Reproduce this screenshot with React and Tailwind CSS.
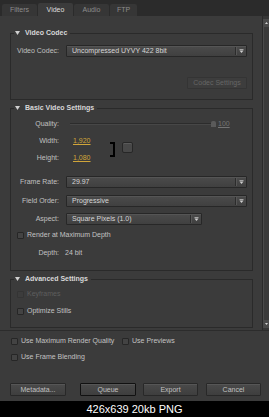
import React from "react";

const font = { fontFamily: '"Liberation Sans", Arial, sans-serif' };

function Tri() {
  return (
    <svg width="5" height="4" viewBox="0 0 5 4" className="shrink-0">
      <path d="M0 0h5L2.5 4z" fill="#d0d0d0" />
    </svg>
  );
}

function DropArrow() {
  return (
    <svg width="5" height="4" viewBox="0 0 5 4">
      <rect x="0.5" y="0" width="4" height="0.8" fill="#bdbdbd" />
      <path d="M0.5 1.6h4L2.5 4z" fill="#cfcfcf" />
    </svg>
  );
}

function Group({ title, className = "", children }) {
  return (
    <fieldset className={`border border-[#2a2a2a] ${className}`}>
      <legend className="ml-[3px] h-[10px] pr-[3px] leading-[10px]">
        <span className="flex h-[10px] items-center text-[7px] font-bold text-[#d8d8d8]">
          <span className="ml-[1px] mr-[5px]">
            <Tri />
          </span>
          {title}
        </span>
      </legend>
      {children}
    </fieldset>
  );
}

function Label({ children }) {
  return <span className="w-[48px] shrink-0 text-right text-[#c0c0c0]">{children}</span>;
}

function Select({ value, className = "" }) {
  return (
    <div
      className={`flex h-[12px] items-center rounded-[1px] border border-[#272727] bg-gradient-to-b from-[#4b4b4b] to-[#404040] shadow-[inset_0_1px_0_#555] ${className}`}
    >
      <span className="flex-1 truncate pl-[5px] leading-[10px] text-[#d6d6d6]">{value}</span>
      <span className="h-[8px] w-px bg-[#2c2c2c]" />
      <span className="h-[8px] w-px bg-[#565656]" />
      <span className="flex w-[9px] justify-center">
        <DropArrow />
      </span>
    </div>
  );
}

function Check({ label, dim = false, className = "" }) {
  return (
    <div className={`flex h-[10px] items-center leading-[10px] ${className}`}>
      <span
        className={`h-[7px] w-[7px] shrink-0 rounded-[1px] border ${
          dim ? "border-[#343434] bg-[#3c3c3c]" : "border-[#262626] bg-[#434343]"
        }`}
      />
      <span className={`ml-[3px] ${dim ? "text-[#5e5e5e]" : "text-[#c2c2c2]"}`}>{label}</span>
    </div>
  );
}

function Button({ children, className = "", focus = false }) {
  return (
    <div
      className={`flex h-[13px] items-center justify-center rounded-[1px] border bg-gradient-to-b from-[#4a4a4a] to-[#3e3e3e] leading-[10px] text-[#c0c0c0] shadow-[inset_0_1px_0_#565656] ${
        focus ? "border-[#111]" : "border-[#282828]"
      } ${className}`}
    >
      {children}
    </div>
  );
}

function Tab({ children, active = false, w }) {
  return (
    <div
      className={`flex items-center justify-center rounded-t-[2px] leading-[10px] ${w} ${
        active ? "h-[13px] bg-[#3b3b3b] text-[#dedede]" : "h-[12px] bg-[#363636] text-[#8c8c8c]"
      }`}
    >
      {children}
    </div>
  );
}

function Scrollbar() {
  return (
    <div className="flex w-[7px] flex-col border-l border-[#2a2a2a] bg-[#363636] pb-[2px] pt-[3px]">
      <div className="flex h-[8px] items-center justify-center bg-[#4a4a4a]">
        <svg width="3" height="2" viewBox="0 0 3 2">
          <path d="M0 2h3L1.5 0z" fill="#cfcfcf" />
        </svg>
      </div>
      <div className="flex-1 border-l border-[#4a4a4a] bg-[#3a3a3a]" />
      <div className="flex h-[8px] items-center justify-center bg-[#4a4a4a]">
        <svg width="3" height="2" viewBox="0 0 3 2">
          <path d="M0 0h3L1.5 2z" fill="#cfcfcf" />
        </svg>
      </div>
    </div>
  );
}

export default function App() {
  return (
    <div className="flex h-[417px] w-[269px] flex-col bg-black text-[7px]" style={font}>
      <div className="flex h-[401px] flex-col bg-[#3b3b3b]">
        {/* tabs */}
        <div className="flex h-[16px] items-end gap-[1px] bg-[#2b2b2b] pl-[2px]">
          <Tab w="w-[35px]">Filters</Tab>
          <Tab w="w-[35px]" active>
            Video
          </Tab>
          <Tab w="w-[35px]">Audio</Tab>
          <Tab w="w-[27px]">FTP</Tab>
        </div>

        {/* scrolling settings */}
        <div className="flex h-[314px]">
          <div className="flex-1 pl-[10px] pr-[9px]">
            <Group title="Video Codec" className="mt-[12px] pb-[10px]">
              <div className="mt-[7px] flex items-center pr-[5px] leading-[10px]">
                <Label>Video Codec:</Label>
                <Select value="Uncompressed UYVY 422 8bit" className="ml-[7px] flex-1" />
              </div>
              <div className="mt-[20px] flex justify-end pr-[5px]">
                <div className="flex h-[12px] w-[60px] items-center justify-center rounded-[1px] border border-[#343434] bg-[#3d3d3d] leading-[10px] text-[#666]">
                  Codec Settings
                </div>
              </div>
            </Group>

            <Group title="Basic Video Settings" className="mt-[3px] pb-[12px]">
              <div className="mt-[6px] flex h-[10px] items-center leading-[10px]">
                <Label>Quality:</Label>
                <div className="ml-[11px] h-[2px] w-[141px] border-b border-[#474747] bg-[#2c2c2c]" />
                <div className="h-[6px] w-[5px] rounded-t-[2px] bg-[#5a5a5a]" />
                <span className="ml-[2px] text-[#747474] underline">100</span>
              </div>
              <div className="mt-[7px] flex">
                <div className="w-[99px]">
                  <div className="flex h-[10px] items-center leading-[10px]">
                    <Label>Width:</Label>
                    <span className="ml-[14px] text-[#d0a53a] underline">1,920</span>
                  </div>
                  <div className="mt-[7px] flex h-[10px] items-center leading-[10px]">
                    <Label>Height:</Label>
                    <span className="ml-[14px] text-[#d0a53a] underline">1,080</span>
                  </div>
                </div>
                <div className="mt-[6px] h-[15px] w-[5px] border-2 border-l-0 border-black" />
                <div className="ml-[7px] mt-[6px] h-[11px] w-[11px] rounded-[2px] border border-[#272727] bg-[#484848] shadow-[inset_0_1px_0_#5a5a5a]" />
              </div>
              <div className="mt-[13px] flex items-center pr-[5px] leading-[10px]">
                <Label>Frame Rate:</Label>
                <Select value="29.97" className="ml-[7px] flex-1" />
              </div>
              <div className="mt-[7px] flex items-center pr-[5px] leading-[10px]">
                <Label>Field Order:</Label>
                <Select value="Progressive" className="ml-[7px] flex-1" />
              </div>
              <div className="mt-[6px] flex items-center leading-[10px]">
                <Label>Aspect:</Label>
                <Select value="Square Pixels (1.0)" className="ml-[7px] w-[136px]" />
              </div>
              <Check label="Render at Maximum Depth" className="ml-[6px] mt-[5px]" />
              <div className="mt-[8px] flex h-[10px] items-center leading-[10px]">
                <Label>Depth:</Label>
                <span className="ml-[6px] text-[#c2c2c2]">24 bit</span>
              </div>
            </Group>

            <Group title="Advanced Settings" className="mt-[3px] pb-[11px]">
              <Check label="Keyframes" dim className="ml-[6px] mt-[5px]" />
              <Check label="Optimize Stills" className="ml-[6px] mt-[7px]" />
            </Group>
          </div>
          <Scrollbar />
        </div>

        <div className="h-px bg-[#2c2c2c]" />

        {/* bottom options */}
        <div className="flex flex-1 flex-col pl-[11px]">
          <div className="mt-[5px] flex">
            <Check label="Use Maximum Render Quality" className="w-[111px]" />
            <Check label="Use Previews" />
          </div>
          <Check label="Use Frame Blending" className="mt-[6px]" />
          <div className="-ml-[1px] mt-[21px] flex">
            <Button className="w-[56px]">Metadata...</Button>
            <Button className="ml-[14px] w-[56px]" focus>
              Queue
            </Button>
            <Button className="ml-[7px] w-[55px]">Export</Button>
            <Button className="ml-[8px] w-[55px]">Cancel</Button>
          </div>
        </div>
      </div>

      <div className="flex h-[16px] items-center justify-center text-[11px] leading-[16px] text-white">
        426x639 20kb PNG
      </div>
    </div>
  );
}
